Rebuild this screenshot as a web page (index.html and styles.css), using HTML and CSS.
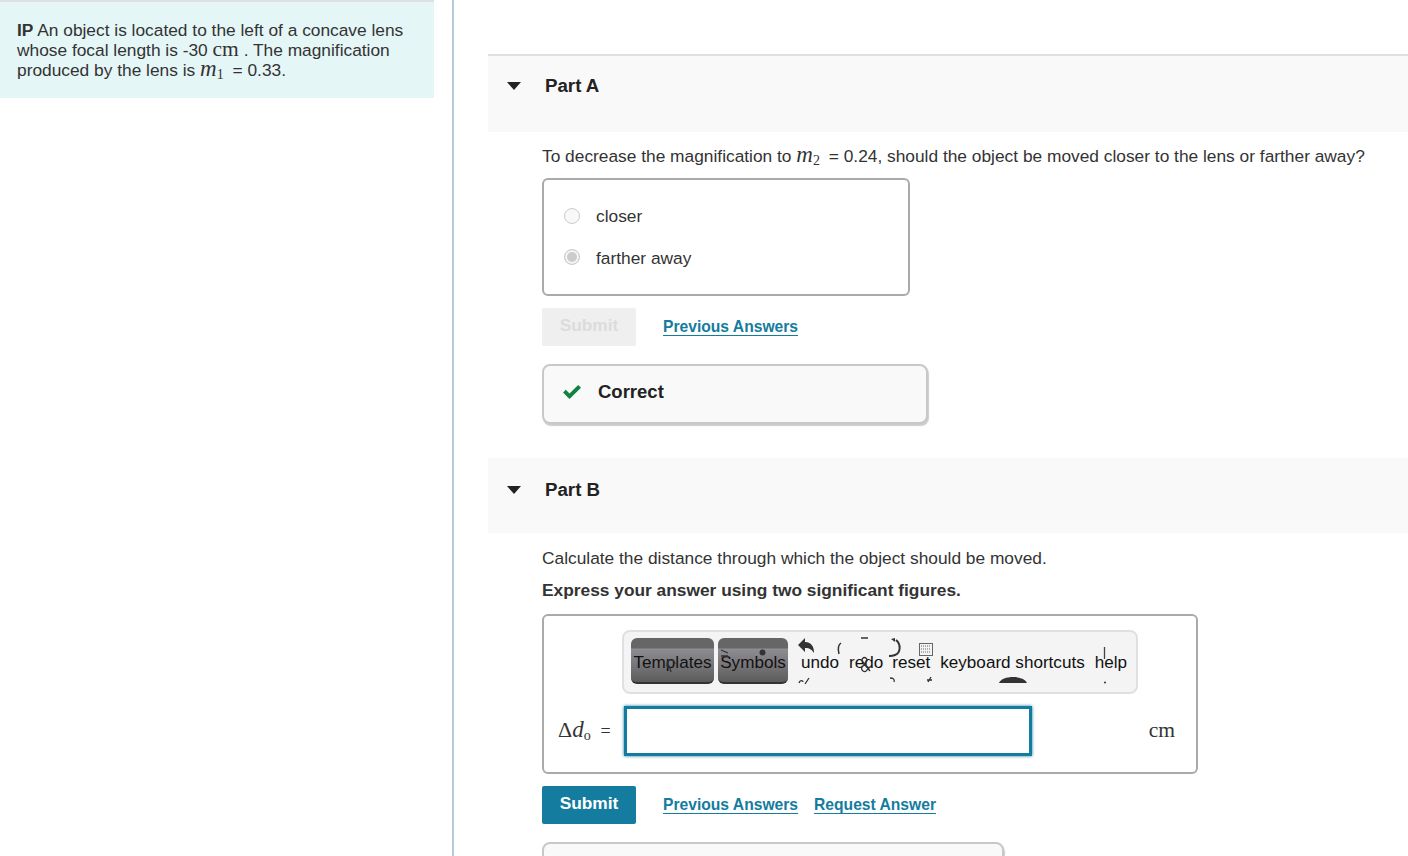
FILE: index.html
```html
<!DOCTYPE html>
<html lang="en">
<head>
<meta charset="utf-8">
<title>Part A and Part B</title>
<link rel="stylesheet" href="styles.css">
</head>
<body>
<div class="page">
  <aside class="side">
    <div class="intro">
      <b>IP</b> An object is located to the left of a concave lens whose focal length is -30 <span class="rm">cm</span> . The magnification produced by the lens is <span class="mi">m</span><sub class="sb">1</sub> <span class="eq">=</span> 0.33.
    </div>
  </aside>
  <main class="main">
    <section>
      <header class="part-head head-a">
        <svg class="caret" width="16" height="10" viewBox="0 0 16 10"><path d="M1 1h14L8 9z" fill="#222"/></svg>
        <h2>Part A</h2>
      </header>
      <div class="part-body body-a">
        <p class="q">To decrease the magnification to <span class="mi">m</span><sub class="sb">2</sub> <span class="eq">=</span> 0.24, should the object be moved closer to the lens or farther away?</p>
        <div class="choices">
          <div class="choice"><span class="radio"></span>closer</div>
          <div class="choice"><span class="radio on"></span>farther away</div>
        </div>
        <div class="actions">
          <span class="btn disabled">Submit</span>
          <a class="link" href="#">Previous Answers</a>
        </div>
        <div class="result">
          <svg class="check" width="20" height="16" viewBox="0 0 20 16"><path d="M1 8.500 3.800 5.700l3.700 3.700L16.200 1 19 3.800 7.500 15z" fill="#0f8442"/></svg>
          <b>Correct</b>
        </div>
      </div>
    </section>
    <section>
      <header class="part-head head-b">
        <svg class="caret" width="16" height="10" viewBox="0 0 16 10"><path d="M1 1h14L8 9z" fill="#222"/></svg>
        <h2>Part B</h2>
      </header>
      <div class="part-body body-b">
        <p class="q">Calculate the distance through which the object should be moved.</p>
        <p class="q strong">Express your answer using two significant figures.</p>
        <div class="answer">
          <div class="toolbar">
            <span class="tb-btn t1">Templates</span>
            <span class="tb-btn t2">Symbols</span>
            <span class="tb-txt undo">undo</span>
            <span class="tb-txt redo">redo</span>
            <span class="tb-txt reset">reset</span>
            <span class="tb-txt keys">keyboard shortcuts</span>
            <span class="tb-txt help">help</span>
            <svg class="tb-icons" width="516" height="64" viewBox="622 630 516 64">
              <g fill="none" stroke="#333" stroke-width="1.300">
                <path d="M675 664a4 4 0 1 0-5 4l1 4" />
                <path d="M721 650l7 3M721 656h7" />
                <path d="M841 643c-3 2-3 7-2 11" stroke-width="1.500"/>
                <path d="M861 638h7" />
                <path d="M870 671l-7-9a2.500 2.500 0 1 1 3 0l-4 5a2.500 2.500 0 0 0 5 3l3-3" />
                <path d="M896 640c5 4 5 13-1 15-2 1-4 1-6 1" stroke-width="2"/>
                <path d="M799 683c1-3 4-3 4-1M809 678l-4 6" />
                <path d="M890 678c3 0 5 1 4 4" />
                <path d="M928 682l3-5M927 680h5" />
                <path d="M1104.500 647v12" stroke="#444"/>
              </g>
              <path d="M798 645l7-7v4c6 0 9 4 9 11-2-3-4-5-9-5v4z" fill="#333"/>
              <path d="M891 639l4-1v4z" fill="#333"/>
              <circle cx="762.500" cy="652.500" r="3" fill="#333"/>
              <g fill="none" stroke="#666">
                <rect x="919.500" y="643.500" width="13" height="12"/>
                <path d="M921 646h10M921 649h10M921 652h10" stroke-dasharray="1 1"/>
              </g>
              <path d="M999 683c3-8 25-8 28 0z" fill="#333"/>
              <circle cx="1105" cy="682.500" r="1" fill="#333"/>
            </svg>
          </div>
          <div class="entry">
            <span class="label"><span class="rm delta">Δ</span><span class="mi big">d</span><sub class="sb">o</sub> <span class="eq rm">=</span></span>
            <input class="field" type="text" aria-label="answer">
            <span class="rm unit">cm</span>
          </div>
        </div>
        <div class="actions">
          <span class="btn">Submit</span>
          <a class="link" href="#">Previous Answers</a>
          <a class="link" href="#">Request Answer</a>
        </div>
        <div class="result stub"></div>
      </div>
    </section>
  </main>
</div>
</body>
</html>
```
FILE: styles.css
```css
* { box-sizing: border-box; }
html, body { margin: 0; height: 100%; overflow: hidden; background: #fff; }
body { font-family: "Liberation Sans", Arial, sans-serif; font-size: 17.330px; color: #333; }
.page { display: flex; height: 856px; overflow: hidden; }
.side { flex: 0 0 454px; border-right: 2px solid #b8c8dc; }
.intro { width: 434px; height: 98px; padding: 18px 17px 0; background: #e5f6f7; border-top: 2px solid #dfe0e2; line-height: 20px; }
.rm { font-family: "Liberation Serif", serif; font-size: 21.500px; line-height: 0; }
.mi { font-family: "Liberation Serif", serif; font-style: italic; font-size: 23px; line-height: 0; }
.sb { font-family: "Liberation Serif", serif; font-size: 14px; vertical-align: -3px; line-height: 0; }
.eq { margin-left: 4px; }
.main { flex: 1; margin-left: 34px; margin-top: 54px; border-top: 2px solid #e0e0e0; min-width: 0; }
.part-head { display: flex; align-items: center; height: 76px; background: #f9f9f9; padding-left: 18px; }
.head-a { padding-bottom: 16px; }
.head-b { height: 75px; padding-bottom: 12px; }
.part-head h2 { margin: 0 0 0 23px; font-size: 18.700px; font-weight: bold; color: #222; }
.part-body { padding-left: 54px; }
.body-a { height: 326px; padding-top: 13px; }
.body-b { padding-top: 14px; }
.q { margin: 0; line-height: 22px; height: 24px; white-space: nowrap; }
.strong { font-weight: bold; margin-top: 8px; }
.choices { width: 368px; height: 118px; margin-top: 9px; padding: 21px 20px 0; border: 2px solid #aaa; border-radius: 6px; display: flex; flex-direction: column; gap: 12px; }
.choice { display: flex; align-items: center; height: 30px; }
.radio { width: 16px; height: 16px; margin-right: 16px; border-radius: 50%; border: 1px solid #ccc; background: #f8f8f8; }
.radio.on { margin-top: -3px; background: #ccc; box-shadow: inset 0 0 0 2px #f4f4f4; }
.actions { display: flex; align-items: center; margin-top: 12px; gap: 16px; }
.btn { width: 94px; height: 38px; margin-right: 11px; display: flex; align-items: center; justify-content: center; background: #147c9e; color: #fff; border-radius: 2px; font-size: 17.330px; font-weight: bold; padding-bottom: 3px; }
.btn.disabled { background: #efefef; color: #dcdcdc; }
.link { color: #147c9e; font-weight: bold; font-size: 15.650px; text-decoration: underline; text-underline-offset: 3px; }
.result { width: 386px; height: 60px; margin-top: 18px; display: flex; align-items: center; padding: 0 0 4px 18px; background: #f9f9f9; border: 2px solid #c8c8c8; border-radius: 8px; box-shadow: 1px 2px 1px #ccc; }
.result b { margin-left: 16px; font-size: 18.500px; color: #222; }
.stub { width: 462px; margin-top: 18px; }
.answer { position: relative; width: 656px; height: 160px; margin-top: 11px; border: 2px solid #aaa; border-radius: 6px; }
.toolbar { position: absolute; left: 78px; top: 14px; width: 516px; height: 64px; display: flex; align-items: center; padding-left: 7px; border: 2px solid #e0e0e0; border-radius: 8px; background: #f4f4f4; color: #111; white-space: nowrap; font-size: 17.100px; overflow: hidden; }
.tb-btn { height: 46px; margin-bottom: 2px; padding-top: 5px; display: flex; align-items: center; justify-content: center; border-radius: 6px; background: linear-gradient(#666 0 10px, #8f8d92 11px, #5c5c5c); border-bottom: 2px solid #333; color: #111; margin-right: 4px; }
.t1 { width: 83px; }
.t2 { width: 70px; margin-right: 13px; }
.tb-txt { display: inline-block; margin-top: 2px; }
.undo { margin-right: 10px; }
.redo { margin-right: 9px; }
.reset { margin-right: 10px; }
.keys { margin-right: 10px; }
.tb-icons { position: absolute; left: -2px; top: -2px; pointer-events: none; }
.entry { position: absolute; left: 14px; right: 21px; top: 90px; height: 50px; display: flex; align-items: center; justify-content: space-between; }
.label { width: 66px; white-space: nowrap; }
.delta { font-size: 22px; }
.big { font-size: 23px; }
.label .eq { font-size: 18px; margin-left: 5px; }
.field { width: 408px; height: 50px; border: 3px solid #147c9e; box-shadow: 0 0 3px #147c9e; outline: none; background: #fff; }
.unit { flex: 1; text-align: right; padding-bottom: 2px; }
```
